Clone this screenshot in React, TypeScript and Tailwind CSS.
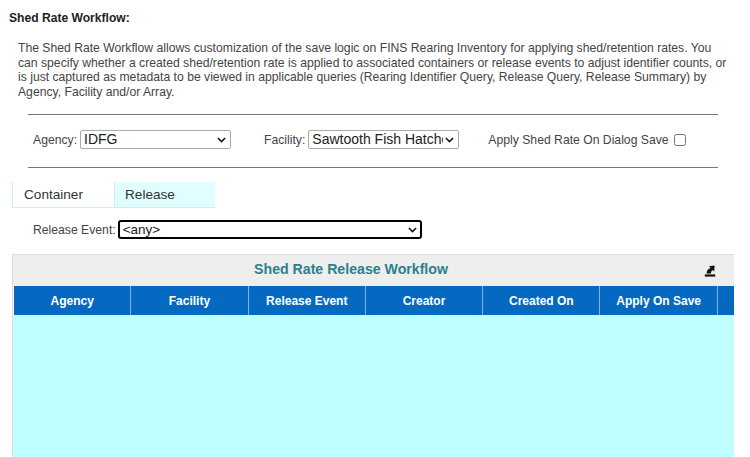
const COLUMNS = ["Agency", "Facility", "Release Event", "Creator", "Created On", "Apply On Save"];

function ExportIcon() {
  return (
    <svg viewBox="0 0 12 12" className="w-[12px] h-[12px]" fill="#111">
      <path d="M10.6 .6 L5 1.2 L6.6 3 C4.4 3.6 2.6 5.4 2.6 8.6 L7 8.6 C7 7.2 7.4 5.8 8.6 5 L10.2 6.4 Z" />
      <rect x=".8" y="9.4" width="10.4" height="2.2" />
    </svg>
  );
}

function Chevron() {
  return (
    <svg viewBox="0 0 10 6" className="absolute right-[5px] top-[7px] w-[9px] h-[5.5px] pointer-events-none" fill="none" stroke="#111" strokeWidth="1.7">
      <path d="M1 1 L5 5 L9 1" />
    </svg>
  );
}

export default function App() {
  return (
    <div className="w-[750px] h-[457px] overflow-hidden bg-white font-['Liberation_Sans',Arial,sans-serif] text-[#444]">
      <div className="pl-[9px] pt-[11px] text-[12.1px] leading-[14px] font-bold text-[#222]">Shed Rate Workflow:</div>

      <p className="ml-[18px] mt-[16px] w-[710px] whitespace-nowrap text-[12.18px] leading-[14.6px] text-[#444]">
        The Shed Rate Workflow allows customization of the save logic on FINS Rearing Inventory for applying shed/retention rates. You
        <br />
        can specify whether a created shed/retention rate is applied to associated containers or release events to adjust identifier counts, or
        <br />
        is just captured as metadata to be viewed in applicable queries (Rearing Identifier Query, Release Query, Release Summary) by
        <br />
        Agency, Facility and/or Array.
      </p>

      <div className="ml-[28px] mt-[15px] w-[690px] border-t border-[#777]" />

      <div className="flex items-center h-[19px] mt-[15px] pl-[33px] text-[12.2px]">
        <label className="mr-[3px]">Agency:</label>
        <div className="relative">
          <select className="block appearance-none w-[151px] h-[19px] pl-[3px] pr-[15px] border border-[#aaa] rounded-[2px] bg-white text-[14px] leading-[17px] text-[#222]">
            <option>IDFG</option>
          </select>
          <Chevron />
        </div>
        <label className="ml-[33px] mr-[3px]">Facility:</label>
        <div className="relative">
          <select className="block appearance-none w-[151px] h-[19px] pl-[3px] pr-[15px] border border-[#aaa] rounded-[2px] bg-white text-[14px] leading-[17px] text-[#222]">
            <option>Sawtooth Fish Hatchery</option>
          </select>
          <Chevron />
        </div>
        <label className="ml-[29px] mr-[5px]">Apply Shed Rate On Dialog Save</label>
        <input type="checkbox" className="w-[12px] h-[12px]" />
      </div>

      <div className="ml-[28px] mt-[18px] w-[690px] border-t border-[#777]" />

      <div className="flex ml-[12px] mt-[14px] h-[26px] text-[13.6px] leading-[25px] text-[#333]">
        <div className="w-[102px] pl-[11px] border-l border-b border-[#cdeef2] bg-white">Container</div>
        <div className="w-[101px] pl-[10px] border-l border-b border-[#cdeef2] bg-[#e0fdff]">Release</div>
      </div>

      <div className="flex items-center h-[19px] mt-[12px] pl-[33px] text-[12.2px]">
        <label className="mr-[2px]">Release Event:</label>
        <div className="relative">
          <select className="block appearance-none w-[304px] h-[19px] pl-[3px] pr-[15px] border-2 border-black rounded-[3px] bg-white text-[13.5px] leading-[15px] text-[#222]">
            <option>{"<any>"}</option>
          </select>
          <Chevron />
        </div>
      </div>

      <div className="ml-[12px] mt-[15px] w-[722px] border-l border-t border-[#dcdcdc]">
        <div className="relative h-[31px] pr-[45px] bg-[#eeeeee] text-center text-[14.15px] leading-[29px] font-bold text-[#2a8288]">
          Shed Rate Release Workflow
          <div className="absolute right-[18px] top-[10px]">
            <ExportIcon />
          </div>
        </div>
        <div className="flex h-[29px] ml-px bg-[#0569c2] text-[12px] leading-[30px] font-bold text-white">
          {COLUMNS.map((c) => (
            <div key={c} className="w-[117.3px] text-center border-r border-[#7fb4e0]">
              {c}
            </div>
          ))}
        </div>
        <div className="h-[150px] bg-[#bfffff]" />
      </div>
    </div>
  );
}
